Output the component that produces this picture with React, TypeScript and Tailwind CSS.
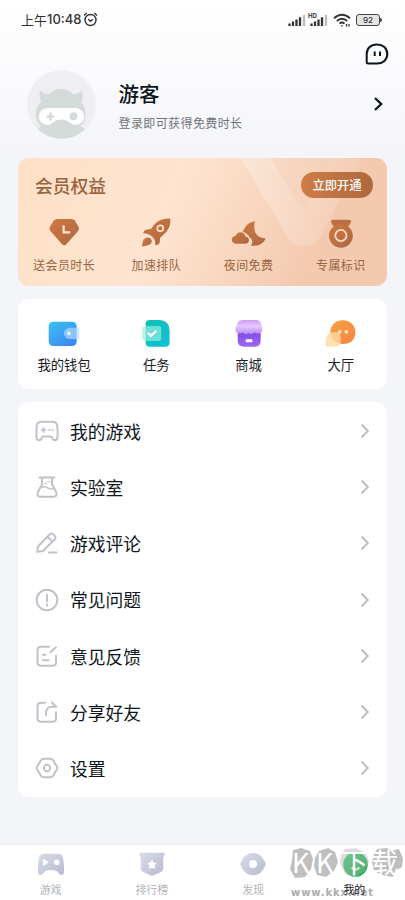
import type { ReactNode } from "react";
import { clsx } from "clsx";

interface Item {
  label: string;
  icon: ReactNode;
}

const benefits: Item[] = [
  {
    label: "送会员时长",
    icon: (
      <>
        <path
          d="M11 1h14.5q2 0 3.3 1.6l3.600 6q1.400 2.400-.5 4.600L20.500 26q-2.200 2.800-4.600 0L4.600 13.200q-2-2.200-.5-4.600l3.600-6Q9 1 11 1Z"
          fill="url(#copper)"
        />
        <path d="M17.600 7.300v7h6.600" fill="none" stroke="#ffe3cb" strokeWidth="2.200" />
      </>
    ),
  },
  {
    label: "加速排队",
    icon: (
      <>
        <path
          d="M31.400.6Q21.500.2 15.700 7.200L13 10.700 7.200 12q-1.200.4-2.200 3.200 5.800 0 9.300 3.500t3 8.800q3.400-1 4.300-2.500l.6-5.300 3-2.600Q33 10.600 32.400 1.600 32.300.7 31.400.6Z"
          fill="url(#copper)"
        />
        <circle cx="22.300" cy="10.300" r="3" fill="#c66e3c" stroke="#ffdfc5" strokeWidth="1.700" />
        <path d="M4 28.300q.2-6.300 3.500-8.300 3-1.500 5.200.6 2 2.300.4 4.800Q10.800 27.600 4 28.300Z" fill="url(#copper)" />
      </>
    ),
  },
  {
    label: "夜间免费",
    icon: (
      <>
        <path
          d="M24 3.300q-8.200 1-11.600 9.200l-1 1.500q5.600 1 7.200 5.500 4.500 2 1.500 8.200 5 .5 9-1.200 4-2.300 5.700-6.100-8-.3-10.700-6.500-1.800-5-.1-10.600Z"
          fill="url(#copper)"
        />
        <path
          d="M4.500 25.700Q1 25 .8 21.700q.2-3.300 3.700-3.900Q5.800 14.300 9.500 14.300q4 0 5 4.300 3.500.5 3.500 3.700-.2 3.400-3.700 3.400Z"
          fill="url(#copper)"
          stroke="#fde0ca"
          strokeWidth="1.800"
          paintOrder="stroke"
        />
      </>
    ),
  },
  {
    label: "专属标识",
    icon: (
      <>
        <path d="M9.800 1.700H26.200q2 0 1.800 1.900-.4 3-3.300 5.400H11.200Q8.500 6.500 8.100 3.600 7.900 1.700 9.800 1.700Z" fill="#bd6e42" />
        <circle cx="17.900" cy="17.800" r="11.900" fill="url(#copper)" />
        <circle cx="17.900" cy="17.500" r="5.600" fill="none" stroke="#ffdcc0" strokeWidth="1.800" />
      </>
    ),
  },
];

const services: Item[] = [
  {
    label: "我的钱包",
    icon: (
      <>
        <rect x="2.700" y="2.700" width="28" height="24.300" rx="4.500" fill="url(#wallet)" />
        <path d="M23.600 8.700h9.700V20h-9.700a5.650 5.650 0 0 1 0-11.300Z" fill="#b5dcff" fillOpacity=".65" />
        <circle cx="22.900" cy="14.400" r="1.800" fill="#fff" />
      </>
    ),
  },
  {
    label: "任务",
    icon: (
      <>
        <path d="M11.600 1h10.500q9.500 1 9.500 10.500v12q0 4.200-4.200 4.200H11.600q-4 0-4-4.200V5q0-4 4-4Z" fill="url(#task)" />
        <rect x="4" y="7" width="19.300" height="15" rx="3" fill="#9df0e4" fillOpacity=".65" />
        <path d="m9.700 13.800 3.100 3.100 5.500-5" fill="none" stroke="#fff" strokeWidth="2.300" />
      </>
    ),
  },
  {
    label: "商城",
    icon: (
      <>
        <path d="M6.700 10h23v11.500q0 6.200-6.200 6.200H13q-6.300 0-6.300-6.200Z" fill="url(#shop)" />
        <path
          d="M11 1h14.500q3 0 4 2.500l1.800 5.300q.6 5.700-4 5.700-2.500 0-3.700-1.200-1.300 1.700-3.500 1.700-1.800 0-2.500-1.200-.8 1.200-2.800 1.200-2 0-3.200-1.700-1 1.200-3.500 1.200-4.300 0-3.500-5.700L6.800 3.500Q8 1 11 1Z"
          fill="url(#awning)"
        />
        <rect x="14.700" y="20.200" width="6.700" height="3" rx=".8" fill="#fff" />
      </>
    ),
  },
  {
    label: "大厅",
    icon: (
      <>
        <path d="M19.800 1.200c7.500 0 12.600 5 12.600 12 0 7.300-5 11.800-12.400 11.800C12.500 25 7.400 20 7.400 13c0-7 5-11.800 12.400-11.800Z" fill="url(#hall)" />
        <path d="M10 13.300h3q4.700.5 4.700 5v4.500q0 4.900-4.900 4.900H4q-2 0-1.300-2v-5q.8-6.900 7.300-7.400Z" fill="#ffd9a0" fillOpacity=".8" />
        <circle cx="16.700" cy="12.900" r="1.800" fill="#ffe9cf" />
        <circle cx="23.300" cy="12.900" r="1.800" fill="#ffe9cf" />
      </>
    ),
  },
];

const menu: Item[] = [
  {
    label: "我的游戏",
    icon: (
      <>
        <path d="M7 2.800h10q4.800 0 5.300 4.200.5 5 .3 11-.3 3.300-2.800 3.300-2 0-2.600-2.500-.3-1.300-1.700-1.300h-7q-1.400 0-1.700 1.300-.6 2.500-2.600 2.500-2.500 0-2.800-3.300-.2-6 .3-11Q2.200 2.800 7 2.800Z" />
        <path d="M6.500 11h4M8.500 9v4" strokeWidth="1.700" />
        <path d="M14.300 11h.1M17.500 11h.1" strokeWidth="2.200" />
      </>
    ),
  },
  {
    label: "实验室",
    icon: (
      <>
        <path d="M4.500 2.500h15M7 2.800v6.400L2.900 17q-1.700 4.500 2.800 4.800h12.600q4.500-.3 2.800-4.800L17 9.200V2.800" />
        <path d="M4.500 13.500q4-3 7.500-.8t7.500.6" strokeWidth="1.500" />
        <path d="M10 8.500h1.500M13 6.700h1" strokeWidth="1.300" />
      </>
    ),
  },
  {
    label: "游戏评论",
    icon: (
      <path d="M2.300 20.200 3 15.500 14.800 3.300q1.700-1.500 3.300 0l1.700 1.700q1.500 1.600 0 3.300L8 20l-5.700.8ZM12.500 5.800l5 4.800M14 21.500h7.500" />
    ),
  },
  {
    label: "常见问题",
    icon: (
      <>
        <circle cx="12" cy="12" r="10.300" />
        <path d="M12 6.700v6.800M12 16.500v1" />
      </>
    ),
  },
  {
    label: "意见反馈",
    icon: (
      <>
        <path d="M14 2.800H6Q2.500 2.800 2.500 6.300v12q0 3.500 3.500 3.500h11.500q3.500 0 3.500-3.500v-6.500" />
        <path d="m15.700 8.300 5.200-5.200M8 10.800h2.500M8 16.300h5.500" />
      </>
    ),
  },
  {
    label: "分享好友",
    icon: (
      <>
        <path d="M10 2.800H6Q2.500 2.800 2.500 6.300v12q0 3.500 3.500 3.500h11.500q3.500 0 3.500-3.500v-6" />
        <path d="M11 15v-2.500q.3-5.800 6-5.800h4.200l-4.200-4.200" />
      </>
    ),
  },
  {
    label: "设置",
    icon: (
      <>
        <path d="M8.500 2.800h7q1.700 0 2.500 1.400l3.900 6.300q.8 1.500 0 3L18 19.800q-.8 1.400-2.500 1.400h-7q-1.700 0-2.500-1.400l-3.900-6.300q-.8-1.500 0-3L6 4.200q.8-1.400 2.500-1.400Z" />
        <circle cx="12" cy="12" r="3.200" />
      </>
    ),
  },
];

const tabs: Item[] = [
  {
    label: "游戏",
    icon: (
      <>
        <path d="M8.500 1.700h13q5 0 5.700 5Q28.500 14 28 20.500q-.4 2.500-2.500 2.500-2.300 0-3.700-3-1.600-2-6.800-2t-6.800 2q-1.400 3-3.700 3Q2.400 23 2 20.500 1.500 14 2.800 6.700q.7-5 5.700-5Z" fill="url(#tab)" />
        <path d="m7.500 7.300 4.500 3-4.500 3Z" fill="#fff" stroke="#fff" strokeLinejoin="round" />
        <circle cx="20.800" cy="10.300" r="2.800" fill="#fff" />
      </>
    ),
  },
  {
    label: "排行榜",
    icon: (
      <>
        <path d="M3.500.8h23q1.500 0 1.300 1.300L26.300 6v10.500q0 2-1.800 3.200L17 23.300q-2 .8-4 0l-7.500-3.600q-1.800-1.200-1.800-3.200V6L2.200 2.100Q2 .8 3.500.8Z" fill="url(#tab)" />
        <path d="m15 8.500 1.300 2.500 2.700.5-1.900 2 .4 2.900-2.500-1.200-2.500 1.200.4-2.900-1.900-2 2.700-.5Z" fill="#fff" stroke="#fff" strokeLinejoin="round" />
      </>
    ),
  },
  {
    label: "发现",
    icon: (
      <>
        <path d="M2.800 10.300Q7 1 15 1t12.200 9.300q.7 1.700 0 3.400Q23 23.300 15 23.300T2.800 13.700q-.7-1.700 0-3.400Z" fill="url(#tab)" />
        <circle cx="15" cy="12" r="4" fill="#fff" />
      </>
    ),
  },
  {
    label: "我的",
    icon: (
      <>
        <circle cx="16.500" cy="12.500" r="12.300" fill="url(#mine)" />
        <path d="M12.500 15.500q4 4 8 0" fill="none" stroke="#fff" strokeWidth="2.200" />
      </>
    ),
  },
];

function Gradients() {
  return (
    <svg className="absolute size-0" aria-hidden="true">
      <defs>
        <linearGradient id="copper" x1="0" y1="0" x2="1" y2="1">
          <stop stopColor="#cf7940" />
          <stop offset="1" stopColor="#ad6744" />
        </linearGradient>
        <linearGradient id="wallet" x1="0" y1="0" x2=".8" y2="1">
          <stop stopColor="#3bc1ef" />
          <stop offset="1" stopColor="#3c87f5" />
        </linearGradient>
        <linearGradient id="task" x1="0" y1="0" x2="1" y2="1">
          <stop stopColor="#0fc0ae" />
          <stop offset="1" stopColor="#10c0dc" />
        </linearGradient>
        <linearGradient id="shop" x1="0" y1="0" x2="0" y2="1">
          <stop stopColor="#7947e0" />
          <stop offset="1" stopColor="#a166f5" />
        </linearGradient>
        <linearGradient id="awning" x1="0" y1="0" x2="0" y2="1">
          <stop stopColor="#cb9cf8" />
          <stop offset=".45" stopColor="#e8c8fc" />
          <stop offset="1" stopColor="#b98af3" />
        </linearGradient>
        <linearGradient id="hall" x1="0" y1="0" x2="1" y2="1">
          <stop stopColor="#f8a33f" />
          <stop offset="1" stopColor="#f58345" />
        </linearGradient>
        <linearGradient id="tab" x1="0" y1="0" x2="1" y2="1">
          <stop stopColor="#d9dce8" />
          <stop offset="1" stopColor="#b8bbcf" />
        </linearGradient>
        <linearGradient id="mine" x1="0" y1="0" x2="1" y2="1">
          <stop stopColor="#49d67d" />
          <stop offset="1" stopColor="#18ad4d" />
        </linearGradient>
        <linearGradient id="ribbon" x1="0" y1="0" x2="1" y2="0">
          <stop stopColor="#fff" stopOpacity=".28" />
          <stop offset="1" stopColor="#fff" stopOpacity=".08" />
        </linearGradient>
      </defs>
    </svg>
  );
}

function Signal() {
  return (
    <svg className="h-3 w-[18px]" viewBox="0 0 18 12" stroke="#333" strokeWidth="2.300">
      <path d="M1.500 12V9.500M5 12V7.500M8.500 12V5.500M12 12V3.200" />
      <path d="M16 12V1" stroke="#bbb" />
    </svg>
  );
}

function StatusBar() {
  return (
    <div className="flex h-[39px] items-center pr-[23px] pl-[21px] text-[#333]">
      <span className="flex items-center text-[13px] leading-none">
        <span>上午</span>
        <span className="font-[Inter] text-[13px] font-medium">10:48</span>
      </span>
      <svg className="ml-[2px] size-[15px]" viewBox="0 0 15 15" fill="none" stroke="#333" strokeWidth="1.400">
        <circle cx="7.500" cy="8" r="5.500" />
        <path d="m5.200 7.200 2.300 2 2.300-2M1 3.500 3.700 1M14 3.500 11.300 1" />
      </svg>
      <div className="ml-auto flex items-center">
        <Signal />
        <div className="relative ml-1">
          <Signal />
          <span className="absolute -top-px -left-0.5 font-[Inter] text-[6px] leading-[6px] font-bold">HD</span>
        </div>
        <svg className="ml-[5px] h-[14px] w-[18px]" viewBox="0 0 18 14" fill="none" stroke="#333" strokeWidth="1.800">
          <path d="M1 5.200q8-7 16 0M3.800 8q5.200-4.500 10.400 0M6.500 10.500q2.500-2 5 0" />
          <path d="M9 12v1.500M13.500 11v2.500M16 11v2.500" strokeWidth="1.300" />
        </svg>
        <div className="ml-[5px] flex h-[12px] w-[24px] items-center justify-center rounded-[3px] border-[1.500px] border-[#444] bg-[#e4e4e4] font-[Inter] text-[8px] font-medium">
          92
        </div>
        <div className="h-1 w-[2px] rounded-r bg-[#444]" />
      </div>
    </div>
  );
}

function Profile() {
  return (
    <div className="flex h-[70px] items-center pr-[18px] pl-[27px]">
      <svg className="size-[69px]" viewBox="0 0 69 69">
        <clipPath id="face">
          <circle cx="34.500" cy="34.500" r="34.300" />
        </clipPath>
        <circle cx="34.500" cy="34.500" r="34.300" fill="#eeeef3" />
        <g clipPath="url(#face)">
          <path
            d="M13.300 20.500q4.200 4.200 8.700 3.500Q28 18.800 34 18.800t12 5.200q5 .7 9-3.500 2 7-.8 11.300 3.600 4.500 4.300 12.200 0 9-5 12l5 3.500Q47 69 34.500 69T10 59.500l4.500-3.700Q8 52 8.500 44q.5-7.500 5.800-12.200-3-5-1-11.300Z"
            fill="#d5dbd8"
          />
          <path d="M20 38h29q8 1 8 8.500T49 55q-3 .3-6-2.500l-3-2q-5.500-2-11 0l-3 2q-3 2.800-6 2.500-8-1-8-8.500T20 38Z" fill="#fff" />
        </g>
        <path d="M19.500 46.500h7.800M23.400 42.600v7.800" stroke="#d5dbd8" strokeWidth="2.600" />
        <circle cx="46.500" cy="46.300" r="4" fill="#d5dbd8" />
      </svg>
      <div className="ml-[22.500px] flex flex-col pt-px">
        <h1 className="text-[20.500px] leading-[30px] font-medium text-[#0c141c]">游客</h1>
        <p className="mt-[6px] text-[12px] leading-[18px] tracking-[0.400px] text-[#6f7478]">登录即可获得免费时长</p>
      </div>
      <svg className="ml-auto size-4" viewBox="0 0 16 16" fill="none" stroke="#0c141c" strokeWidth="2.300">
        <path d="m4 2 6.200 6L4 14" />
      </svg>
    </div>
  );
}

function MemberCard() {
  return (
    <section className="relative mt-[19px] h-[128px] overflow-hidden rounded-[11px] bg-linear-115 from-[#fee0c7] via-[#fee5d1] via-40% to-[#f3c9af] to-80% text-[#9a633f]">
      <svg className="absolute inset-0 h-[128px] w-[369px]" viewBox="0 0 369 128">
        <path d="M222 0H345l-43 79q-5 9-14 9h-4q-9 0-14-9Z" fill="url(#ribbon)" />
        <path d="M253 0h61l-24 46q-5 7-10 0Z" fill="#f3c9af" fillOpacity=".3" />
      </svg>
      <div className="relative flex items-center justify-between pt-[14px] pr-[14px] pl-[17px]">
        <h2 className="text-[17.800px] leading-[26px] font-medium">会员权益</h2>
        <button className="h-[26px] w-[72px] rounded-full bg-linear-to-r from-[#cf7c45] to-[#ae683e] text-[12.300px] font-medium text-white">
          立即开通
        </button>
      </div>
      <div className="relative mt-5 grid grid-cols-4">
        {benefits.map((item) => (
          <div key={item.label} className="flex flex-col items-center">
            <svg className="h-[30px] w-[36px]" viewBox="0 0 36 30">
              {item.icon}
            </svg>
            <span className="mt-[8px] text-[12px] leading-[18px] tracking-[0.400px]">{item.label}</span>
          </div>
        ))}
      </div>
    </section>
  );
}

function ServiceCard() {
  return (
    <section className="mt-[13px] grid h-[90px] grid-cols-4 rounded-[11px] bg-white pt-5">
      {services.map((item) => (
        <div key={item.label} className="flex flex-col items-center">
          <svg className="h-[30px] w-[36px]" viewBox="0 0 36 30">
            {item.icon}
          </svg>
          <span className="mt-[6px] text-[13.300px] leading-5 text-[#1a2026]">{item.label}</span>
        </div>
      ))}
    </section>
  );
}

function MenuList() {
  return (
    <section className="mt-[13px] rounded-[11px] bg-white pt-[0.800px] pr-[14px] pl-[17px]">
      {menu.map((item) => (
        <div key={item.label} className="flex h-[56.250px] items-center">
          <svg
            className="size-6"
            viewBox="0 0 24 24"
            fill="none"
            stroke="#bfc2cb"
            strokeWidth="2"
            strokeLinecap="round"
            strokeLinejoin="round"
          >
            {item.icon}
          </svg>
          <span className="ml-[11px] text-[17.800px] text-[#10161c]">{item.label}</span>
          <svg className="ml-auto size-4" viewBox="0 0 16 16" fill="none" stroke="#bcbfca" strokeWidth="2">
            <path d="m4.500 1.500 6.300 6.500-6.300 6.500" />
          </svg>
        </div>
      ))}
    </section>
  );
}

function Watermark() {
  return (
    <div className="absolute top-[2px] left-[289px] w-[116px]">
      <div className="relative h-[31px]">
        <svg className="absolute inset-0 h-[31px] w-[116px]" viewBox="0 0 116 31" fill="#a9a9a9">
          <path
            d="m4 3 8-2 9 3 3 8-2 10-6 8-10 1-5-9 2-9ZM30 4l9-3 7 4 3 10-4 9-8 6-9-2-3-9 1-8ZM88 2l10-1 4 3 8-2 4 9-1 9-6 3-3 7-11-2-8-4-2-9 2-8Z"
            fillOpacity=".75"
          />
          <path d="m56 2 11-1 10 5 3 9-4 9-10 6-10-3-5-10 1-9Z" fillOpacity=".4" />
        </svg>
        <div className="relative flex h-[29px] items-center pl-[3px] text-[27px] leading-none text-white">
          <span className="w-6">K</span>
          <span className="w-[25px]">K</span>
          <span className="w-[30px]">下</span>
          <span>载</span>
        </div>
      </div>
      <div className="mt-[9px] ml-[2px] font-['DejaVu_Sans'] text-[10px] leading-[12px] font-bold tracking-[0.900px] text-[#adadad]">
        www.kkx.net
      </div>
    </div>
  );
}

function TabBar() {
  return (
    <nav className="relative mt-auto grid h-[55px] grid-cols-4 bg-white pt-[7px] shadow-[0_-1px_3px_rgba(0,0,0,0.05)]">
      {tabs.map((item, i) => (
        <div key={item.label} className="flex flex-col items-center">
          <svg className="h-[25px] w-[30px]" viewBox="0 0 30 25">
            {item.icon}
          </svg>
          <span
            className={clsx(
              "relative mt-[4px] text-[11px] leading-4",
              i === 3 ? "z-10 text-[#1c2226]" : "text-[#b0b3bb]",
            )}
          >
            {item.label}
          </span>
        </div>
      ))}
      <Watermark />
    </nav>
  );
}

export default function App() {
  return (
    <div className="flex h-[900px] w-[405px] flex-col overflow-hidden bg-[#f4f5f9] bg-[linear-gradient(#ffffff,#f4f5f9_160px)] font-['Noto_Sans_CJK_SC',sans-serif]">
      <Gradients />
      <StatusBar />
      <div className="flex h-[30px] justify-end pt-[3px] pr-4">
        <svg className="size-6" viewBox="0 0 24 24" fill="none" stroke="#0c141c" strokeWidth="2">
          <path d="M12 2.500c6 0 10.300 3.700 10.300 9.500S18 21.500 12 21.500H3.200q-1.500 0-1.500-1.500v-8C1.700 6.200 6 2.500 12 2.500Z" />
          <path d="M9.700 9.500v4.500M15 9.500v4.500" />
        </svg>
      </div>
      <Profile />
      <main className="px-[18px]">
        <MemberCard />
        <ServiceCard />
        <MenuList />
      </main>
      <TabBar />
    </div>
  );
}
